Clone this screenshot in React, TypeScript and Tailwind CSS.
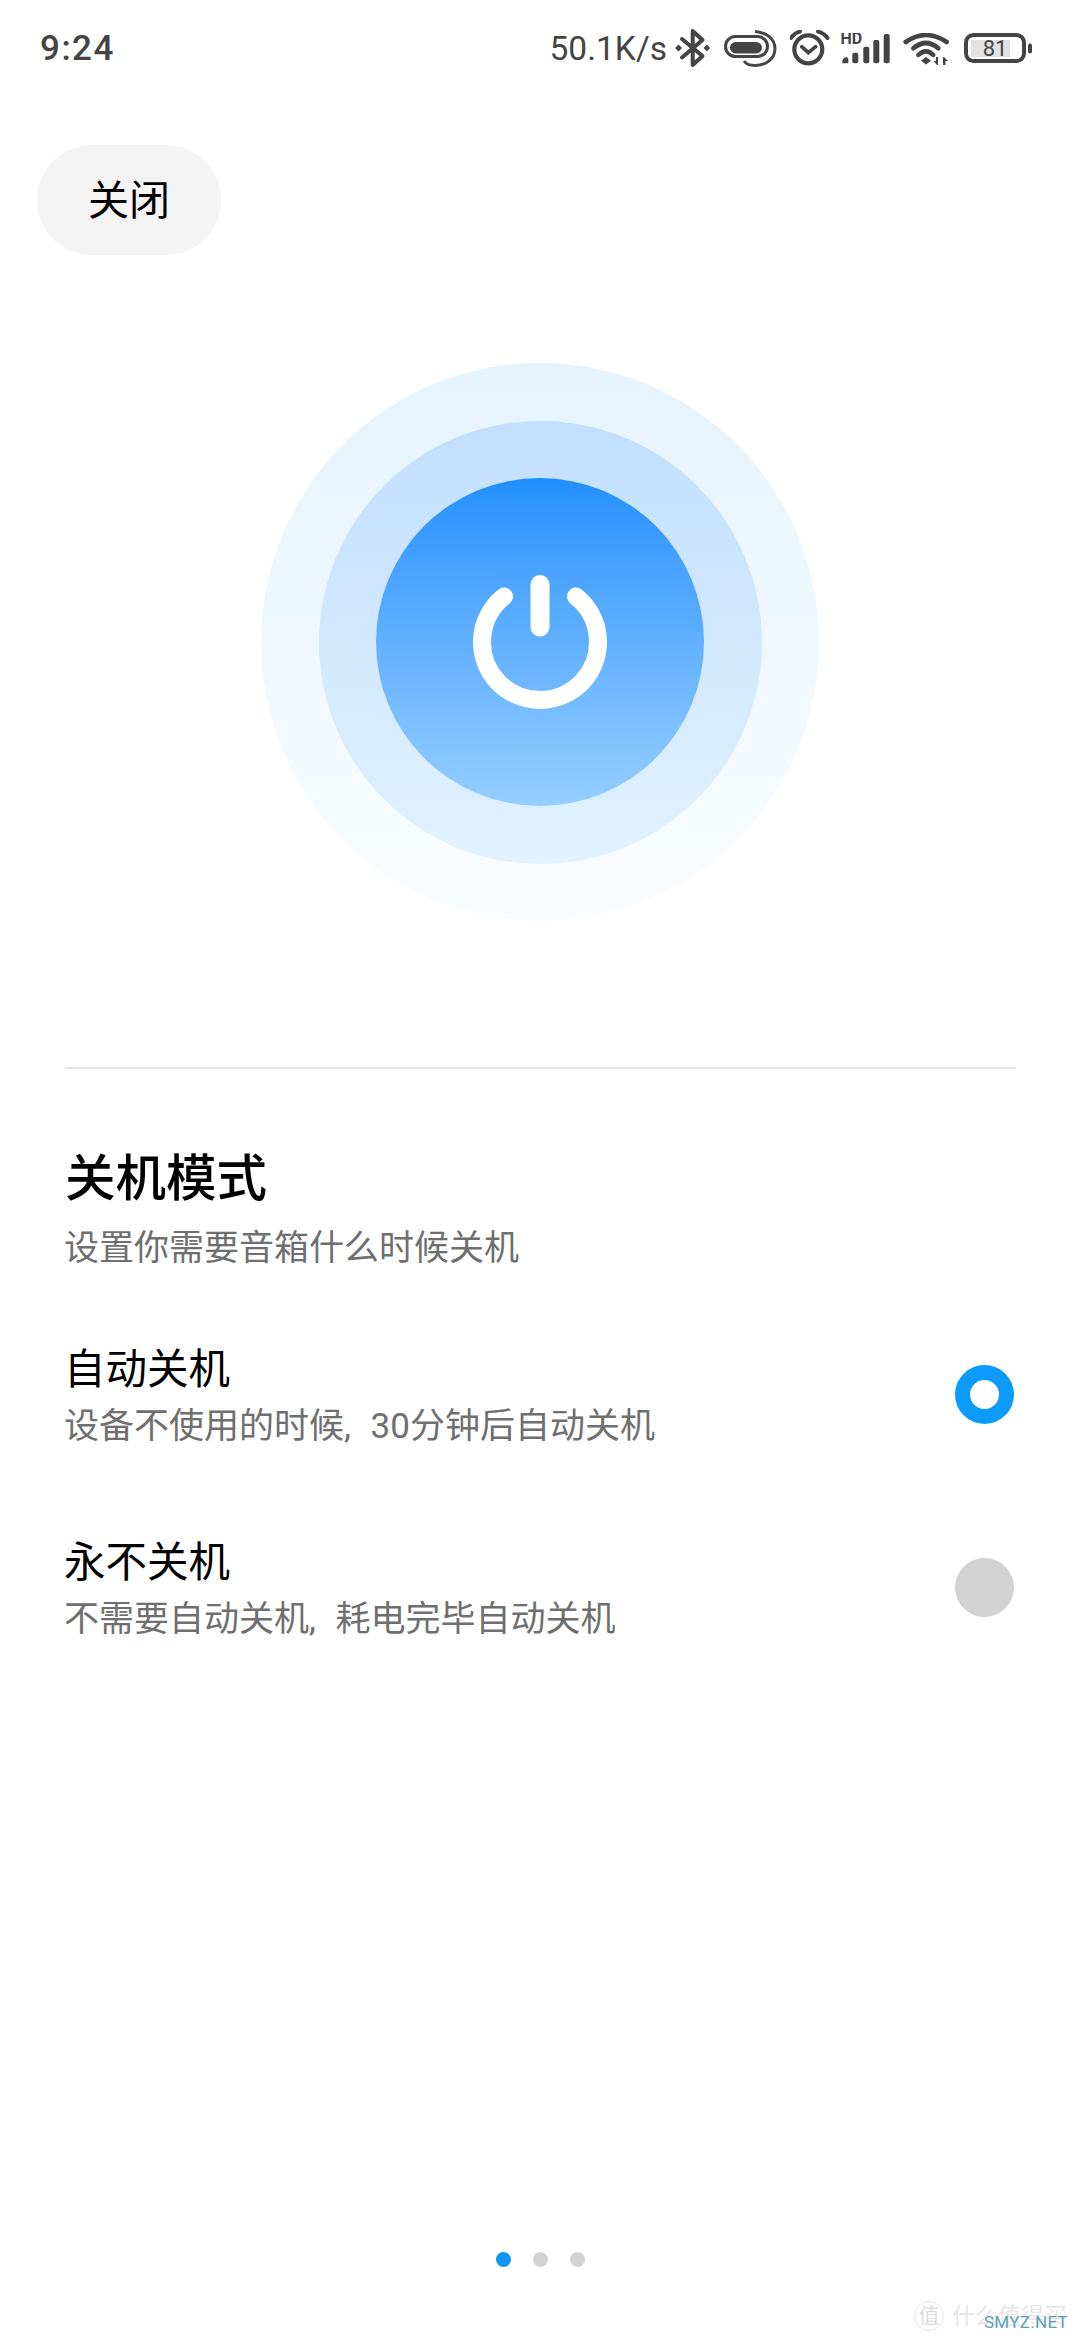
export default function App() {
  return (
    <div className="relative flex h-[2340px] w-[1080px] flex-col overflow-hidden bg-white font-['Roboto','Noto_Sans_CJK_SC',sans-serif]">
      <StatusBar />
      <button className="ml-[37px] mt-[49px] flex h-[110px] w-[184px] items-center justify-center rounded-[55px] bg-[#f4f4f4] pt-[3px] text-[41px] leading-none text-black">
        关闭
      </button>
      <Hero />
      <div className="ml-[65px] mr-[64px] mt-[146px] h-[2px] bg-[#e4e4e4]" />
      <section className="pl-[64px] pr-[65px] pt-[80px]">
        <h1 className="pl-[1px] text-[50.500px] font-medium leading-[60px] text-black">关机模式</h1>
        <p className="mt-[17px] text-[35px] leading-[46px] text-[#6f6f6f]">设置你需要音箱什么时候关机</p>
      </section>
      <div className="mt-[70px] flex flex-col gap-[85px] pl-[64px] pr-[66px]">
        <Option title="自动关机" sub="设备不使用的时候, 30分钟后自动关机" active />
        <Option title="永不关机" sub="不需要自动关机, 耗电完毕自动关机" />
      </div>
      <div className="mt-auto flex justify-center gap-[22px] pb-[73px] pl-[1px]">
        <span className="h-[15px] w-[15px] rounded-full bg-[#0d96f8]" />
        <span className="h-[15px] w-[15px] rounded-full bg-[#d2d2d2]" />
        <span className="h-[15px] w-[15px] rounded-full bg-[#d2d2d2]" />
      </div>
      <Watermark />
    </div>
  );
}

function Option({ title, sub, active }: { title: string; sub: string; active?: boolean }) {
  return (
    <div className="flex items-center justify-between">
      <div>
        <div className="text-[41.500px] leading-[56px] text-black">{title}</div>
        <div className="mt-[6px] text-[35px] leading-[46px] text-[#6f6f6f] [word-spacing:11px]">{sub}</div>
      </div>
      {active ? (
        <span className="mb-[3px] h-[59px] w-[59px] rounded-full border-[15px] border-[#0d9bfb] bg-white" />
      ) : (
        <span className="mb-[3px] h-[59px] w-[59px] rounded-full bg-[#d2d2d2]" />
      )}
    </div>
  );
}

function Hero() {
  return (
    <div className="mt-[108px] flex justify-center">
      <div className="flex h-[558px] w-[558px] items-center justify-center rounded-full bg-gradient-to-b from-[#e5f3fe] to-[#fafdff]">
        <div className="flex h-[443px] w-[443px] items-center justify-center rounded-full bg-gradient-to-b from-[#c1dffd] to-[#e2f2ff]">
          <div className="flex h-[328px] w-[328px] items-center justify-center rounded-full bg-gradient-to-b from-[#2090fd] to-[#95ceff]">
            <svg width="136" height="135" viewBox="0 0 136 135" fill="none" stroke="#fff" strokeLinecap="round">
              <path d="M32 21.500 A58 58 0 1 0 104 21.500" strokeWidth="18" />
              <path d="M68 9.500 V52" strokeWidth="19" />
            </svg>
          </div>
        </div>
      </div>
    </div>
  );
}

function StatusBar() {
  return (
    <div className="flex h-[96px] shrink-0 items-center pl-[40px] pr-[48px] text-[#444]">
      <span className="mt-[2px] text-[35px] font-medium tracking-[1.500px]">9:24</span>
      <span className="ml-auto mt-[2px] whitespace-nowrap text-[33.500px]">50.1K/s</span>
      <svg className="ml-[8px] mt-[1px]" width="35" height="41" viewBox="0 0 35 41" fill="none" stroke="#444" strokeWidth="4">
        <path d="M7 11 L27.500 28 L17.700 37 V3 L27.500 12 L7 29.500" strokeLinejoin="round" strokeLinecap="round" />
        <path d="M0 20 L3.500 16.500 L7 20 L3.500 23.500 Z M28.500 20 L32 16.500 L35 20 L32 23.500 Z" fill="#444" stroke="none" />
      </svg>
      <svg className="ml-[13px] mt-[4px]" width="54" height="40" viewBox="0 0 54 40" fill="none" stroke="#444">
        <rect x="2.500" y="6.500" width="42" height="20" rx="10" strokeWidth="3" />
        <rect x="7" y="12" width="32" height="11.500" rx="5.750" fill="#444" stroke="none" />
        <path d="M32 1.500 C44 2.500 52 9 52 18.500 C52 29 43 35.500 32 35.500 C27 35.500 23 34 21 31" strokeWidth="3" />
      </svg>
      <svg className="ml-[13px] mt-[2px]" width="40" height="38" viewBox="0 0 40 38" fill="none" stroke="#444">
        <circle cx="18.300" cy="19.300" r="14" strokeWidth="4.200" />
        <path d="M11.700 16.700 L18.300 22.700 L25.700 16.700" strokeWidth="3.600" strokeLinecap="round" />
        <path d="M1 8 Q4 3 10 1.500 M37.500 8 Q34 3 28 1.500" strokeWidth="4" strokeLinecap="round" />
      </svg>
      <svg className="ml-[10px] mt-[1px]" width="50" height="31" viewBox="0 0 50 31" fill="#444">
        <text x="0.500" y="11" fontFamily="Roboto" fontSize="16" fontWeight="700" fill="#444">HD</text>
        <path d="M2.300 28.500 Q2.300 26 4 25 L6 24.300 Q8.300 23.800 8.300 26 V30.300 H2.300 Z" />
        <rect x="12.300" y="19.700" width="6" height="10.600" rx="2" />
        <rect x="23.300" y="13.700" width="6" height="16.600" rx="2" />
        <rect x="33.300" y="7" width="6" height="23.300" rx="2" />
        <rect x="43.700" y="1" width="6" height="29.300" rx="2" />
      </svg>
      <svg className="ml-[12px] mt-[3px]" width="47" height="33" viewBox="0 0 47 33" fill="none" stroke="#444" strokeLinecap="round">
        <path d="M3.700 9 Q24 -5 44.700 9" strokeWidth="4.600" />
        <path d="M11.300 15.300 Q24 4.700 36.300 15.300" strokeWidth="4.600" />
        <path d="M16.300 22 Q24 14.600 31.300 22" strokeWidth="4.400" />
        <path d="M24 24 L29 27.700 L24 31.500 L19 27.700 Z" fill="#444" stroke="none" />
        <path d="M36 24 V32 H35 L31.500 28 H34 V24 Z M41 32 V24 H42 L46 28 H43.500 V32 Z" fill="#444" stroke="none" />
      </svg>
      <svg className="ml-[15px]" width="68" height="30" viewBox="0 0 68 30" fill="none">
        <rect x="2" y="2" width="58" height="26" rx="7.500" stroke="#444" strokeWidth="4" />
        <rect x="7" y="7" width="39" height="17" fill="#e2e2e2" />
        <text x="31" y="23" textAnchor="middle" fontFamily="Roboto" fontSize="22" fill="#444">81</text>
        <rect x="64" y="10.500" width="4" height="10" rx="2" fill="#444" />
      </svg>
    </div>
  );
}

function Watermark() {
  return (
    <div className="absolute bottom-[8px] right-[12px] flex h-[32px] w-[154px] items-center whitespace-nowrap">
      <span className="flex h-[30px] w-[30px] shrink-0 items-center justify-center rounded-full border border-[#e6e6e6] text-[21px] leading-none text-[#dcdcdc]">值</span>
      <span className="ml-[8px] text-[23px] leading-none text-[#e6e6e6]">什么值得买</span>
      <span className="absolute bottom-[1px] right-[0px] text-[17px] leading-none tracking-[0.300px] text-[#5aa3b4]">SMYZ.NET</span>
    </div>
  );
}
